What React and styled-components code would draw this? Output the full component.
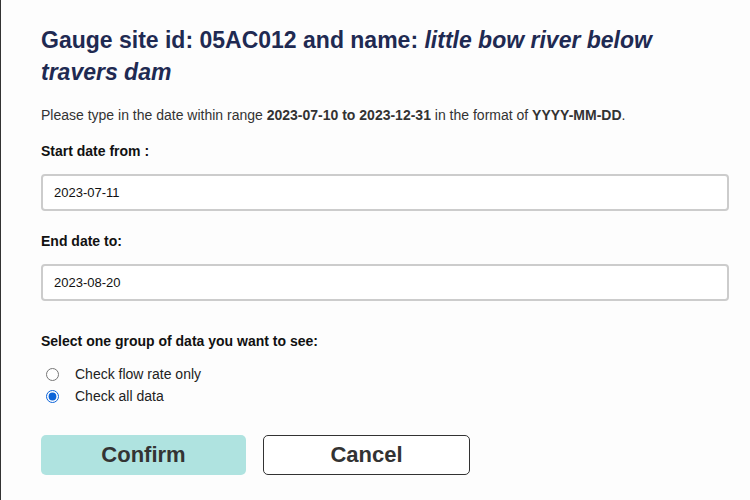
import styled, { createGlobalStyle } from 'styled-components';

const GlobalStyle = createGlobalStyle`
    html, body {
        margin: 0;
        padding: 0;
        background: #fdfdfd;
    }
    body {
        font-family: 'Liberation Sans', Arial, sans-serif;
    }
`;

const Page = styled.div`
    box-sizing: border-box;
    width: 750px;
    height: 500px;
    border-left: 1px solid #333333;
    padding: 24px 20px 0 40px;
    color: #222222;
`;

const Title = styled.h2`
    margin: 0;
    font-size: 23px;
    line-height: 32px;
    font-weight: 700;
    color: #1f2a52;
    width: 660px;

    em {
        font-style: italic;
    }
`;

const Hint = styled.p`
    margin: 18px 0 0;
    font-size: 14px;
    line-height: 18px;
    color: #333333;
`;

const Field = styled.div`
    display: flex;
    flex-direction: column;
    margin-top: ${(p) => p.$top}px;
`;

const Label = styled.label`
    font-size: 14px;
    font-weight: 700;
    line-height: 18px;
    color: #111111;
`;

const DateInput = styled.input`
    box-sizing: border-box;
    width: 688px;
    height: 37px;
    margin-top: 14px;
    padding: 0 11px;
    border: 2px solid #cccccc;
    border-radius: 4px;
    background: #ffffff;
    font-family: 'Liberation Sans', Arial, sans-serif;
    font-size: 13px;
    color: #111111;
    outline: none;
`;

const RadioGroup = styled.div`
    display: flex;
    flex-direction: column;
    gap: 4px;
    margin-top: 15px;
`;

const RadioRow = styled.label`
    display: flex;
    align-items: center;
    gap: 16px;
    font-size: 14px;
    line-height: 18px;
    color: #222222;

    input {
        margin: 0 0 0 5px;
        width: 13px;
        height: 13px;
        accent-color: #0b63d8;
    }
`;

const Actions = styled.div`
    display: flex;
    gap: 17px;
    margin-top: 30px;
`;

const Button = styled.button`
    box-sizing: border-box;
    height: 40px;
    width: ${(p) => p.$width}px;
    border-radius: 5px;
    border: ${(p) => (p.$primary ? 'none' : '1px solid #333333')};
    background: ${(p) => (p.$primary ? '#afe3e0' : '#ffffff')};
    font-family: 'Liberation Sans', Arial, sans-serif;
    font-size: 22px;
    font-weight: 700;
    color: #333333;
    cursor: pointer;
`;

function App() {
    return (
        <Page>
            <GlobalStyle />
            <Title>
                Gauge site id: 05AC012 and name: <em>little bow river below travers dam</em>
            </Title>
            <Hint>
                Please type in the date within range <b>2023-07-10 to 2023-12-31</b> in the format of{' '}
                <b>YYYY-MM-DD</b>.
            </Hint>
            <Field $top={18}>
                <Label>Start date from :</Label>
                <DateInput defaultValue="2023-07-11" />
            </Field>
            <Field $top={21}>
                <Label>End date to:</Label>
                <DateInput defaultValue="2023-08-20" />
            </Field>
            <Field $top={31}>
                <Label>Select one group of data you want to see:</Label>
                <RadioGroup>
                    <RadioRow>
                        <input type="radio" name="group" value="flow" />
                        Check flow rate only
                    </RadioRow>
                    <RadioRow>
                        <input type="radio" name="group" value="all" defaultChecked />
                        Check all data
                    </RadioRow>
                </RadioGroup>
            </Field>
            <Actions>
                <Button $primary $width={205}>Confirm</Button>
                <Button $width={207}>Cancel</Button>
            </Actions>
        </Page>
    );
}

export default App;
